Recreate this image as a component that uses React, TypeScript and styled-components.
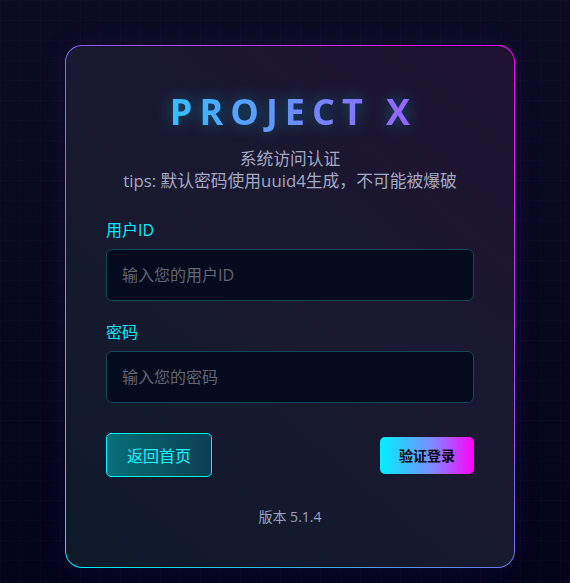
import styled, { createGlobalStyle } from 'styled-components';

const GlobalStyle = createGlobalStyle`
  html, body {
    margin: 0;
    padding: 0;
  }
  body {
    font-family: "Open Sans", "Noto Sans CJK SC", sans-serif;
    background-color: #070818;
  }
`;

const Page = styled.div`
  min-height: 583px;
  box-sizing: border-box;
  padding: 45px 0 0 10px;
  display: flex;
  justify-content: center;
  align-items: flex-start;
  background-color: #070818;
  background-image:
    linear-gradient(rgba(90, 90, 200, 0.035) 1px, transparent 1px),
    linear-gradient(90deg, rgba(90, 90, 200, 0.035) 1px, transparent 1px),
    linear-gradient(180deg, #0b0b22 0%, #04041a 100%);
  background-size: 20px 20px, 20px 20px, 100% 100%;
`;

const CardFrame = styled.div`
  width: 450px;
  padding: 1px;
  box-sizing: border-box;
  border-radius: 17px;
  background: linear-gradient(45deg, #00f0ff 0%, #7b6cf0 50%, #ff00ff 100%);
  box-shadow: 0 0 30px rgba(120, 60, 220, 0.1);
`;

const Card = styled.div`
  border-radius: 16px;
  padding: 42px 40px 40px;
  background: linear-gradient(40deg, #0e1a2a 0%, #191930 50%, #1e1230 100%);
  display: flex;
  flex-direction: column;
`;

const Title = styled.h1`
  margin: 0 0 0 7px;
  text-align: center;
  font-family: "Open Sans", sans-serif;
  font-weight: 700;
  font-size: 36px;
  line-height: 48px;
  letter-spacing: 7px;
  background: linear-gradient(90deg, #1ed6ff 0%, #6b8cff 50%, #b050ff 100%);
  -webkit-background-clip: text;
  background-clip: text;
  color: transparent;
  filter: drop-shadow(0 0 8px rgba(0, 200, 255, 0.4));
`;

const Subtitle = styled.p`
  margin: 12px 0 27px;
  text-align: center;
  color: #a3a8c3;
  font-size: 16.8px;
  line-height: 22px;
`;

const Field = styled.div`
  display: flex;
  flex-direction: column;
  margin-bottom: 20px;
`;

const Label = styled.label`
  color: #00f0ff;
  font-size: 16px;
  line-height: 22px;
  margin-bottom: 8px;
`;

const Input = styled.input`
  height: 52px;
  box-sizing: border-box;
  border: 1px solid #14485a;
  border-radius: 6px;
  background: #050b1e;
  color: #d0d8f0;
  padding: 0 15px;
  font-family: inherit;
  font-size: 16px;
  outline: none;
  &::placeholder {
    color: #63666f;
  }
`;

const Actions = styled.div`
  display: flex;
  justify-content: space-between;
  align-items: center;
  margin-top: 10px;
`;

const GhostButton = styled.button`
  height: 44px;
  padding: 0 20px;
  border: 1px solid #00f0ff;
  border-radius: 5px;
  background: linear-gradient(90deg, #077078 0%, #0c3e52 100%);
  color: #1ff2ff;
  font-family: inherit;
  font-size: 16px;
  cursor: pointer;
`;

const PrimaryButton = styled.button`
  height: 37px;
  padding: 0 19px;
  border: none;
  border-radius: 5px;
  background: linear-gradient(90deg, #00f0ff 0%, #7c8cff 55%, #ff00ff 100%);
  color: #0a0a14;
  font-family: inherit;
  font-size: 14px;
  font-weight: 700;
  cursor: pointer;
`;

const Version = styled.div`
  margin-top: 30px;
  text-align: center;
  color: #9ba1bd;
  font-size: 14px;
  line-height: 20px;
`;

export default function App() {
  return (
    <>
      <GlobalStyle />
      <Page>
        <CardFrame>
          <Card>
            <Title>PROJECT X</Title>
            <Subtitle>
              系统访问认证
              <br />
              tips: 默认密码使用uuid4生成，不可能被爆破
            </Subtitle>
            <Field>
              <Label>用户ID</Label>
              <Input placeholder="输入您的用户ID" />
            </Field>
            <Field>
              <Label>密码</Label>
              <Input type="password" placeholder="输入您的密码" />
            </Field>
            <Actions>
              <GhostButton>返回首页</GhostButton>
              <PrimaryButton>验证登录</PrimaryButton>
            </Actions>
            <Version>版本 5.1.4</Version>
          </Card>
        </CardFrame>
      </Page>
    </>
  );
}
